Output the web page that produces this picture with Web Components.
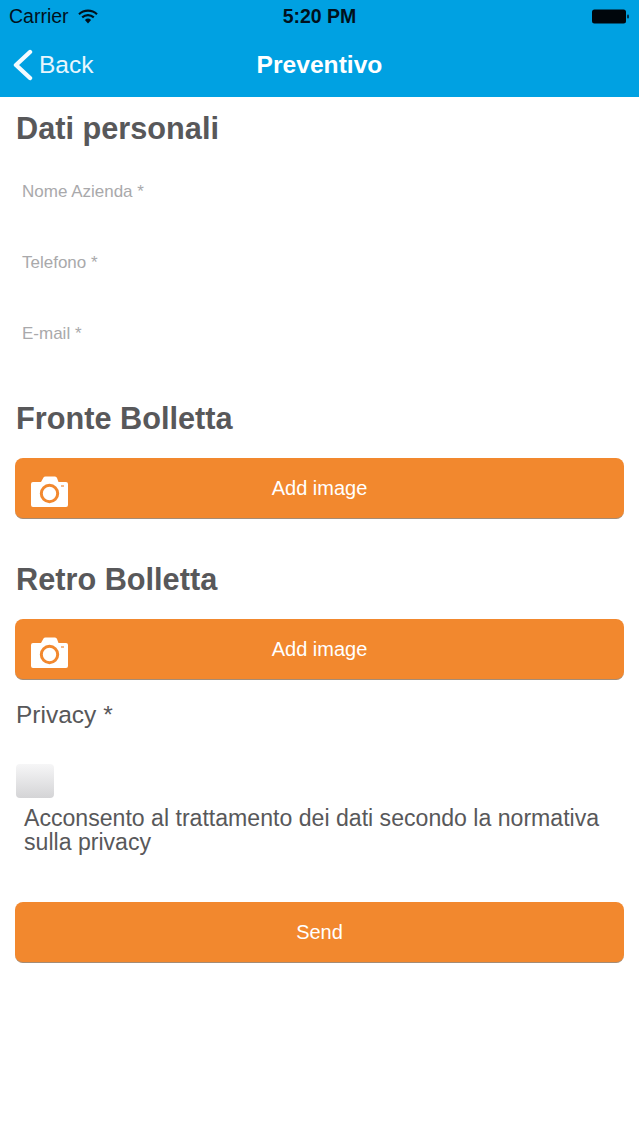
<!DOCTYPE html>
<html>
<head>
<meta charset="utf-8">
<title>Preventivo</title>
<style>
    html, body { margin: 0; padding: 0; background: #fff; }
    body { font-family: "Liberation Sans", Arial, sans-serif; color: #58585a; }
    app-form { padding: 0 15px 0 15px; }
</style>
</head>
<body>
<app-header title="Preventivo" back="Back"></app-header>
<app-form>
    <form-title>Dati personali</form-title>
    <form-field>Nome Azienda *</form-field>
    <form-field>Telefono *</form-field>
    <form-field>E-mail *</form-field>
    <form-title style="margin-top:37px">Fronte Bolletta</form-title>
    <form-button icon style="margin-top:19px">Add image</form-button>
    <form-title style="margin-top:41px">Retro Bolletta</form-title>
    <form-button icon style="margin-top:19px">Add image</form-button>
    <privacy-check label="Privacy *">Acconsento al trattamento dei dati secondo la normativa sulla privacy</privacy-check>
    <form-button style="margin-top:48px">Send</form-button>
</app-form>
<script>
class AppHeader extends HTMLElement {
    constructor() {
        super();
        this.attachShadow({ mode: 'open' });
    }

    connectedCallback() {
        this.shadowRoot.innerHTML = `
            <style>
                :host { display: block; background: #00a1e2; height: 97px; box-sizing: border-box; }
                .status {
                    display: grid;
                    grid-template-columns: 1fr auto 1fr;
                    align-items: center;
                    height: 33px;
                    padding: 0 9px 0 9px;
                    color: #00111c;
                    font-size: 19.5px;
                }
                .left { display: flex; align-items: center; gap: 9px; }
                .time { font-weight: bold; }
                .battery { justify-self: end; display: flex; }
                .nav {
                    display: grid;
                    grid-template-columns: 1fr auto 1fr;
                    align-items: center;
                    height: 64px;
                    color: #fff;
                }
                .back { display: flex; align-items: center; gap: 6px; padding-left: 12px; font-size: 24.5px; color: #e8f6fd; }
                .title { font-size: 24.6px; font-weight: bold; }
            </style>
            <div class="status">
                <div class="left">
                    <span>Carrier</span>
                    <svg width="20" height="15" viewBox="0 0 20 15">
                        <path d="M1 5.2 a13 13 0 0 1 18 0" fill="none" stroke="#00111c" stroke-width="2.1"/>
                        <path d="M4.2 8.4 a8.6 8.6 0 0 1 11.6 0" fill="none" stroke="#00111c" stroke-width="2.1"/>
                        <path d="M6.9 11 a4.6 4.6 0 0 1 6.2 0 L10 14.4 Z" fill="#00111c"/>
                    </svg>
                </div>
                <span class="time">5:20 PM</span>
                <svg class="battery" width="38" height="15" viewBox="0 0 38 15">
                    <rect x="0" y="0.5" width="34" height="14" rx="2.5" fill="#00060c"/>
                    <rect x="35" y="5.5" width="2" height="4" rx="1" fill="#00314a"/>
                </svg>
            </div>
            <div class="nav">
                <div class="back">
                    <svg width="21" height="32" viewBox="0 0 21 32">
                        <path d="M18 3 L4 16 L18 29" fill="none" stroke="#f4fbff" stroke-width="4.4" stroke-linecap="round" stroke-linejoin="round"/>
                    </svg>
                    <span>${this.getAttribute('back')}</span>
                </div>
                <div class="title">${this.getAttribute('title')}</div>
                <div></div>
            </div>
        `;
    }
}

class AppForm extends HTMLElement {
    constructor() {
        super();
        this.attachShadow({ mode: 'open' });
        this.shadowRoot.innerHTML = `
            <style>
                :host { display: flex; flex-direction: column; }
            </style>
            <slot></slot>
        `;
    }
}

class FormTitle extends HTMLElement {
    constructor() {
        super();
        this.attachShadow({ mode: 'open' });
        this.shadowRoot.innerHTML = `
            <style>
                :host { display: block; font-size: 30.7px; font-weight: bold; line-height: 40px; height: 40px; margin-left: 1px; margin-top: 12px; color: #58585a; }
            </style>
            <slot></slot>
        `;
    }
}

class FormField extends HTMLElement {
    constructor() {
        super();
        this.attachShadow({ mode: 'open' });
        this.shadowRoot.innerHTML = `
            <style>
                :host { display: block; height: 71px; font-size: 17px; color: #a9a9ab; padding-left: 7px; line-height: 20px; box-sizing: border-box; padding-top: 33px; }
            </style>
            <slot></slot>
        `;
    }
}

class FormButton extends HTMLElement {
    constructor() {
        super();
        this.attachShadow({ mode: 'open' });
        this.shadowRoot.innerHTML = `
            <style>
                :host {
                    display: flex;
                    position: relative;
                    align-items: center;
                    justify-content: center;
                    height: 61px;
                    width: 609px;
                    box-sizing: border-box;
                    background: #f2882e;
                    border-radius: 8px;
                    border-bottom: 1px solid #a48c76;
                    color: #fff;
                    font-size: 20px;
                }
                svg { position: absolute; left: 15px; top: 17px; }
            </style>
            ${this.hasAttribute('icon') ? `
            <svg width="39" height="32" viewBox="0 0 39 32">
                <path d="M3 7 H11 L13.5 2.5 Q14 1.5 15.5 1.5 H25 Q26.5 1.5 27 3 L28.5 7 H36 Q38 7 38 9 V30 Q38 32 36 32 H3 Q1 32 1 30 V9 Q1 7 3 7 Z" fill="#fff"/>
                <circle cx="19.5" cy="18.5" r="8.2" fill="none" stroke="#f2882e" stroke-width="3"/>
                <rect x="31" y="10" width="3" height="2" fill="#f6b98a"/>
            </svg>` : ''}
            <slot></slot>
        `;
    }
}

class PrivacyCheck extends HTMLElement {
    constructor() {
        super();
        this.attachShadow({ mode: 'open' });
    }

    connectedCallback() {
        this.shadowRoot.innerHTML = `
            <style>
                :host { display: block; }
                .label { font-size: 24.5px; line-height: 30px; margin: 20px 0 0 1px; }
                .box {
                    width: 38px;
                    height: 34px;
                    margin-top: 34px;
                    margin-left: 1px;
                    border-radius: 4px;
                    background: linear-gradient(#f6f6f7, #d4d4d6);
                }
                .text { font-size: 23.1px; line-height: 24px; margin: 8px 10px 0 9px; }
            </style>
            <div class="label">${this.getAttribute('label')}</div>
            <div class="box"></div>
            <div class="text"><slot></slot></div>
        `;
    }
}

customElements.define('app-header', AppHeader);
customElements.define('app-form', AppForm);
customElements.define('form-title', FormTitle);
customElements.define('form-field', FormField);
customElements.define('form-button', FormButton);
customElements.define('privacy-check', PrivacyCheck);
</script>
</body>
</html>
